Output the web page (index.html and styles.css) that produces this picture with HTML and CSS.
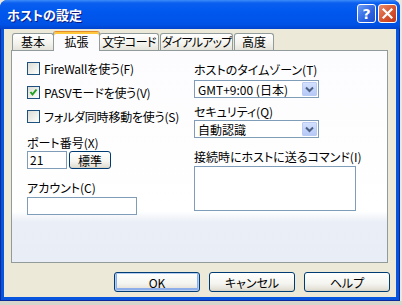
FILE: index.html
```html
<!DOCTYPE html>
<html lang="ja">
<head>
    <meta charset="UTF-8">
    <meta name="viewport" content="width=device-width, initial-scale=1.0">
    <title>ホストの設定</title>
    <link rel="stylesheet" href="styles.css">
</head>
<body>
    <div class="window">
        <div class="titlebar">
            <span class="title">ホストの設定</span>
            <div class="caption-buttons">
                <span class="cap-btn help">?</span>
                <span class="cap-btn close">
                    <svg width="11" height="11" viewBox="0 0 11 11"><path d="M1.5 1.5 L9.5 9.5 M9.5 1.5 L1.5 9.5" stroke="#fff" stroke-width="2.2" stroke-linecap="square"/></svg>
                </span>
            </div>
        </div>
        <div class="client">
            <div class="tabs">
                <span class="tab t-basic">基本</span>
                <span class="tab active">拡張</span>
                <span class="tab t-code">文字コード</span>
                <span class="tab t-dial">ダイアルアップ</span>
                <span class="tab t-adv">高度</span>
            </div>
            <div class="panel">
                <div class="col left-col">
                    <label class="check"><span class="box"></span>FireWallを使う(F)</label>
                    <label class="check"><span class="box"><svg width="11" height="11" viewBox="0 0 11 11"><path d="M2.5 5 L4.5 7.5 L8.5 2.5" fill="none" stroke="#21A121" stroke-width="2"/></svg></span>PASVモードを使う(V)</label>
                    <label class="check"><span class="box"></span>フォルダ同時移動を使う(S)</label>
                    <div class="field-label port-label">ポート番号(X)</div>
                    <div class="port-row">
                        <span class="input port">21</span>
                        <span class="btn small">標準</span>
                    </div>
                    <div class="field-label account-label">アカウント(C)</div>
                    <span class="input account"></span>
                </div>
                <div class="col right-col">
                    <div class="field-label tz-label">ホストのタイムゾーン(T)</div>
                    <div class="select tz-select">
                        <span class="value">GMT+9:00 (日本)</span>
                        <span class="drop"><svg width="9" height="7" viewBox="0 0 9 7"><path d="M1 1.5 L4.5 5 L8 1.5" fill="none" stroke="#4D6185" stroke-width="2"/></svg></span>
                    </div>
                    <div class="field-label sec-label">セキュリティ(Q)</div>
                    <div class="select sec-select">
                        <span class="value">自動認識</span>
                        <span class="drop"><svg width="9" height="7" viewBox="0 0 9 7"><path d="M1 1.5 L4.5 5 L8 1.5" fill="none" stroke="#4D6185" stroke-width="2"/></svg></span>
                    </div>
                    <div class="field-label cmd-label">接続時にホストに送るコマンド(I)</div>
                    <span class="input command"></span>
                </div>
            </div>
            <div class="buttons">
                <span class="btn default">OK</span>
                <span class="btn">キャンセル</span>
                <span class="btn">ヘルプ</span>
            </div>
        </div>
    </div>
    <div class="desk-strip"></div>
</body>
</html>
```

FILE: styles.css
```css
body {
    margin: 0;
    width: 402px;
    height: 305px;
    overflow: hidden;
    background: #e9e7e0;
    font-family: "Noto Sans CJK JP", sans-serif;
    font-size: 12px;
    font-feature-settings: "palt";
    color: #000;
}
.window {
    width: 400px;
    height: 301px;
    box-sizing: border-box;
    display: flex;
    flex-direction: column;
    background: #0855dd;
    border: 1px solid #0a2a9c;
    border-top: none;
    border-radius: 8px 8px 0 0;
}
.titlebar {
    height: 29px;
    margin: 0 -1px;
    flex-shrink: 0;
    display: flex;
    align-items: center;
    justify-content: space-between;
    padding: 0 3px 0 7px;
    border-radius: 7px 7px 0 0;
    background: linear-gradient(#3c8cf8 0, #0a5ff0 3px, #0058ee 40%, #0052e6 85%, #0042cc 100%);
}
.title {
    color: #fff;
    font-weight: bold;
    font-size: 13px;
    text-shadow: 1px 1px 0 #0a1883;
    margin-top: -1px;
}
.caption-buttons {
    display: flex;
    gap: 2px;
    margin-top: -2px;
}
.cap-btn {
    width: 19px;
    height: 19px;
    box-sizing: border-box;
    border: 1px solid #fff;
    border-radius: 3px;
    display: flex;
    align-items: center;
    justify-content: center;
    color: #fff;
    font-family: "DejaVu Sans", sans-serif;
    font-weight: bold;
    font-size: 14px;
}
.help {
    background: linear-gradient(135deg, #6f9cf5, #2a62e2 60%, #1d4fd0);
}
.close {
    background: linear-gradient(135deg, #e88b6c, #d5542f 55%, #c0361a);
}
.client {
    flex: 1;
    margin: 0 3px 3px;
    background: #ece9d8;
    padding: 2px 8px 5px 7px;
    display: flex;
    flex-direction: column;
}
.tabs {
    display: flex;
    align-items: flex-end;
    height: 19px;
    padding-left: 1px;
    position: relative;
    z-index: 1;
}
.tab {
    flex-shrink: 0;
    height: 17px;
    box-sizing: border-box;
    border: 1px solid #919b9c;
    border-bottom: none;
    border-radius: 3px 3px 0 0;
    background: linear-gradient(#ffffff, #f3f2ec 60%, #e5e3da);
    text-align: center;
    line-height: 15px;
    margin-right: 1px;
    white-space: nowrap;
    overflow: hidden;
}
.t-basic { width: 42px; }
.t-code { width: 60px; letter-spacing: -0.6px; }
.t-dial { width: 73px; letter-spacing: -0.8px; }
.t-adv { width: 40px; }
.tab.active {
    width: 47px;
    height: 20px;
    margin: 0 -1px -1px -2px;
    background: #fcfcfe;
    border-top: 1px solid #e68b2c;
    box-shadow: inset 0 2px 0 #ffc83c;
    line-height: 19px;
}
.tab.active + .tab {
    margin-left: 0;
}
.panel {
    height: 213px;
    box-sizing: border-box;
    border: 1px solid #919b9c;
    background: linear-gradient(#fcfcfe 0%, #ffffff 76%, #eaeef6 81%, #e9edf5 100%);
    display: flex;
}
.left-col {
    width: 167px;
    padding: 11px 0 0 15px;
    display: flex;
    flex-direction: column;
    align-items: flex-start;
}
.right-col {
    padding-top: 12px;
    display: flex;
    flex-direction: column;
    align-items: flex-start;
}
.check {
    display: flex;
    align-items: center;
    height: 13px;
    line-height: 13px;
    margin-bottom: 11px;
    letter-spacing: -0.2px;
}
.box {
    width: 13px;
    height: 13px;
    box-sizing: border-box;
    border: 1px solid #1c5180;
    background: linear-gradient(135deg, #dcdcd7, #f4f4f0 70%, #ffffff);
    margin-right: 4px;
    display: flex;
    align-items: center;
    justify-content: center;
}
.field-label {
    height: 14px;
    line-height: 14px;
    white-space: nowrap;
}
.port-label { margin-top: 2px; }
.port-row {
    display: flex;
    gap: 2px;
    margin-top: 1px;
}
.account-label { margin-top: 12px; }
.input {
    display: block;
    box-sizing: border-box;
    height: 18px;
    border: 1px solid #7f9db9;
    background: #fff;
    line-height: 16px;
    padding-left: 2px;
}
.port { width: 40px; }
.account {
    width: 110px;
    margin-top: 2px;
}
.select {
    width: 125px;
    height: 18px;
    box-sizing: border-box;
    border: 1px solid #7f9db9;
    background: #fff;
    display: flex;
    align-items: center;
    justify-content: space-between;
    padding: 0 1px 0 3px;
    margin-top: 3px;
}
.drop {
    width: 15px;
    height: 14px;
    box-sizing: border-box;
    border: 1px solid #b9cbf3;
    border-radius: 1px;
    background: linear-gradient(#d3e0fd, #b5c9f7);
    display: flex;
    align-items: center;
    justify-content: center;
}
.sec-label { margin-top: 7px; }
.sec-select { margin-top: 1px; }
.cmd-label { margin-top: 12px; }
.command {
    width: 162px;
    height: 45px;
    margin-top: 2px;
}
.btn {
    box-sizing: border-box;
    height: 20px;
    border: 1px solid #003c74;
    border-radius: 3px;
    background: linear-gradient(#ffffff, #f4f4f0 60%, #e4e1d6 90%, #d6d0c5);
    display: flex;
    align-items: center;
    justify-content: center;
}
.btn.small {
    width: 42px;
    height: 18px;
}
.buttons {
    display: flex;
    justify-content: flex-end;
    gap: 9px;
    margin-top: 9px;
    margin-right: -2px;
}
.buttons .btn {
    width: 86px;
}
.btn.default {
    box-shadow: inset 0 0 0 1px #b5cdf2, inset 0 -1px 0 2px #8daee8;
}
.desk-strip {
    height: 4px;
    background: #d8d5cc;
}
```
